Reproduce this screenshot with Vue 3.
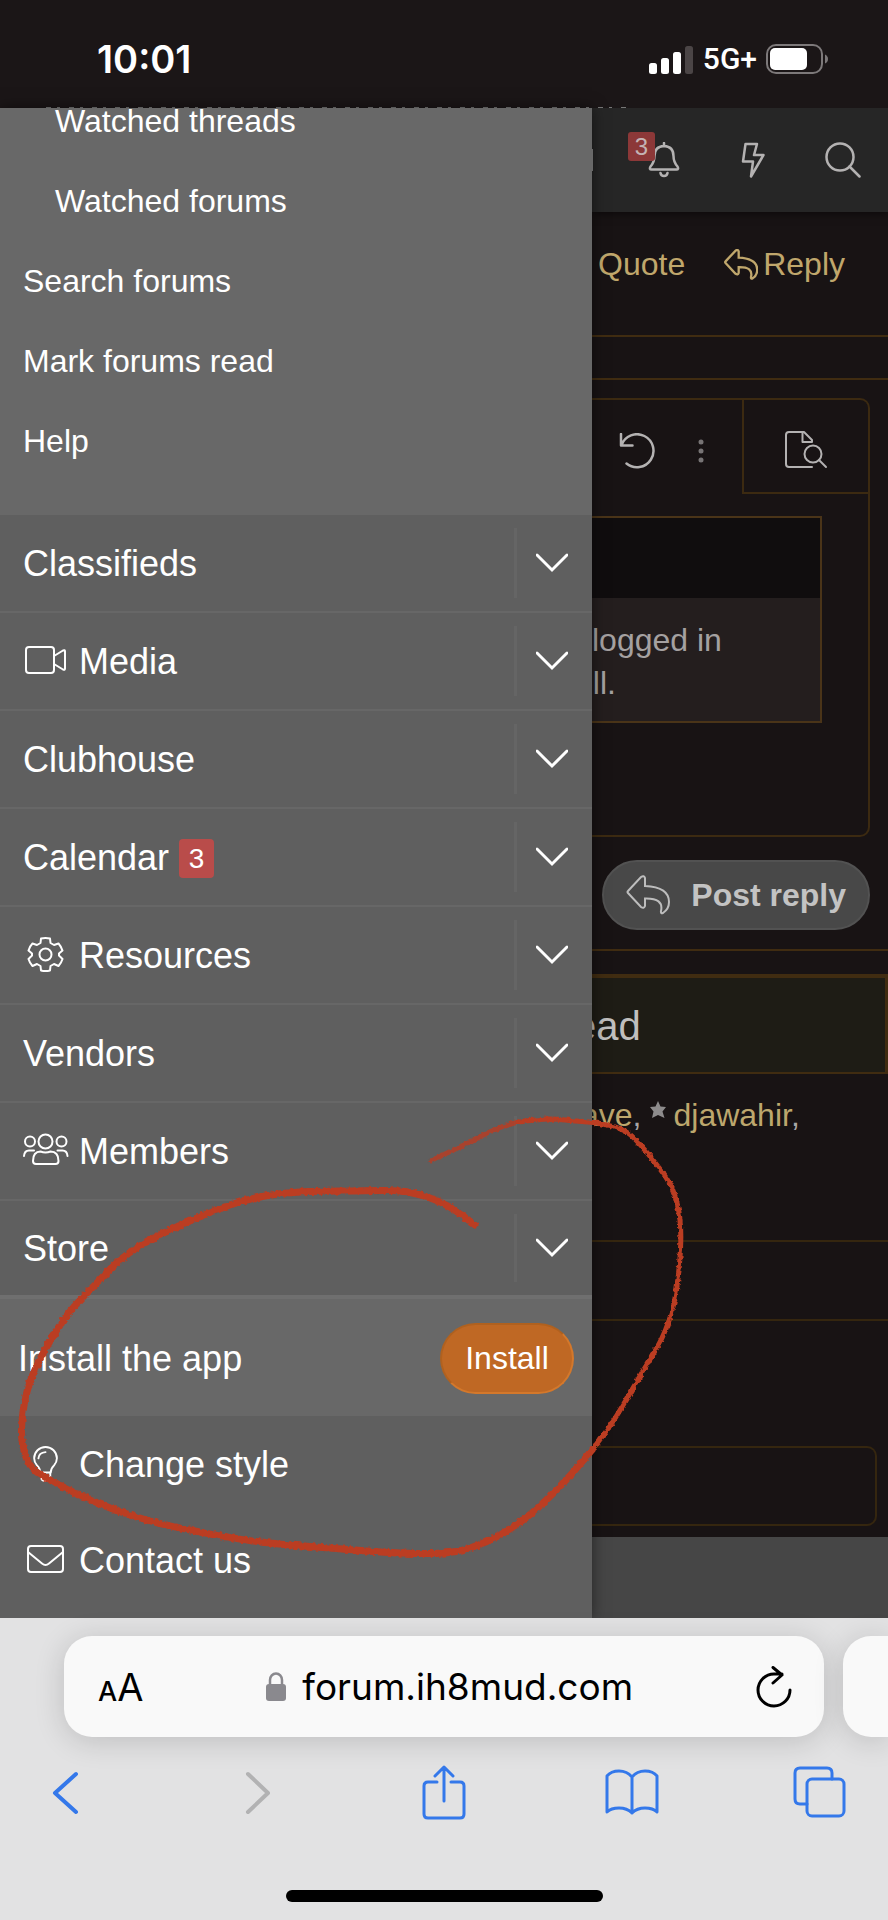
<script setup>
const subLinks = [
  { label: 'Watched threads', nested: true },
  { label: 'Watched forums', nested: true },
  { label: 'Search forums' },
  { label: 'Mark forums read' },
  { label: 'Help' },
]

const sections = [
  { label: 'Classifieds' },
  { label: 'Media', icon: 'video' },
  { label: 'Clubhouse' },
  { label: 'Calendar', badge: 3 },
  { label: 'Resources', icon: 'gear' },
  { label: 'Vendors' },
  { label: 'Members', icon: 'people' },
  { label: 'Store' },
]

// Points of the hand-drawn marker loop, joined with a Catmull-Rom curve.
const markerStart = [[431, 1161], [445, 1154], [470, 1142], [494, 1130], [518, 1122]]
const markerRight = [
  [518, 1122], [548, 1119], [575, 1121], [602, 1124], [628, 1133], [653, 1160], [672, 1188],
  [680, 1220], [680, 1258], [674, 1303], [662, 1338], [640, 1376], [614, 1420], [592, 1450],
]
const markerLeft = [
  [592, 1450], [566, 1480], [532, 1513], [500, 1535], [470, 1548], [444, 1553], [400, 1553],
  [330, 1548], [260, 1542], [200, 1532], [150, 1521], [100, 1504], [50, 1480], [30, 1465],
  [22, 1440], [23, 1412], [30, 1382], [46, 1348], [68, 1314], [92, 1288], [120, 1260],
  [150, 1240], [190, 1221], [230, 1205], [265, 1196], [300, 1192], [350, 1191], [400, 1191],
  [430, 1198], [453, 1209], [475, 1225],
]

function curve(points) {
  let d = `M${points[0].join(' ')}`
  for (let i = 0; i < points.length - 1; i++) {
    const a = points[i - 1] || points[i]
    const b = points[i]
    const c = points[i + 1]
    const e = points[i + 2] || c
    d += ` C${b[0] + (c[0] - a[0]) / 6} ${b[1] + (c[1] - a[1]) / 6}`
    d += ` ${c[0] - (e[0] - b[0]) / 6} ${c[1] - (e[1] - b[1]) / 6} ${c[0]} ${c[1]}`
  }
  return d
}
</script>

<template>
  <div class="screen">
    <header class="status">
      <span class="clock">10:01</span>
      <div class="signals">
        <svg class="bars" viewBox="0 0 45 29" aria-hidden="true">
          <rect x="0" y="18" width="8" height="11" rx="2.500" fill="#fff" />
          <rect x="12" y="13" width="8" height="16" rx="2.500" fill="#fff" />
          <rect x="24" y="7" width="8" height="22" rx="2.500" fill="#fff" />
          <rect x="36" y="1" width="8" height="28" rx="2.500" fill="#4b4546" />
        </svg>
        <span class="network">5G+</span>
        <svg class="battery" viewBox="0 0 62 30" aria-hidden="true">
          <rect x="1" y="1" width="55" height="28" rx="9" fill="none" stroke="#7d797a" stroke-width="2" />
          <rect x="4" y="4" width="37" height="22" rx="5" fill="#fff" />
          <path d="M59 10.500q3 1.500 3 4.500t-3 4.500z" fill="#7d797a" />
        </svg>
      </div>
      <span class="sliver"></span>
    </header>

    <main class="viewport">
      <nav class="drawer" aria-label="Main menu">
        <div class="sub">
          <a v-for="l in subLinks" :key="l.label" href="#" class="sub-link" :class="{ nested: l.nested }">{{ l.label }}</a>
        </div>

        <div v-for="s in sections" :key="s.label" class="row">
          <a href="#" class="row-link">
            <svg v-if="s.icon === 'video'" class="icon" viewBox="0 0 46 36" aria-hidden="true">
              <rect x="3" y="4" width="28" height="26" rx="3" />
              <path d="M31 13L40 7.500Q42 6.500 42 8.500V25.500Q42 27.500 40 26.500L31 21" />
            </svg>
            <svg v-else-if="s.icon === 'gear'" class="icon" viewBox="0 0 46 36" aria-hidden="true">
              <circle cx="22.500" cy="17.500" r="6" />
              <path d="M18 1.500Q22.500 .5 27 1.500L27.500 6L31 8L35.500 6.500Q38 9.300 39.500 13.500L36 16.500V18.500L39.500 22Q38.300 26 35.500 29L31 27L27.500 29L27 33.500Q22.500 34.700 18 33.500L17.500 29L14 27L9.500 29Q6.700 26 5.500 22L9 18.500V16.500L5.500 13.500Q6.700 9.300 9.500 6.500L14 8L17.500 6Z" />
            </svg>
            <svg v-else-if="s.icon === 'people'" class="icon" viewBox="0 0 46 36" aria-hidden="true">
              <circle cx="22.500" cy="8.500" r="7" />
              <circle cx="7" cy="8.500" r="5" />
              <circle cx="38.500" cy="8.500" r="5" />
              <path d="M10 28Q10 18.500 17.500 18.500Q22.500 20.500 27.500 18.500Q35.500 18.500 35.500 28Q35.500 31 32.500 31H13Q10 31 10 28Z" />
              <path d="M1 23Q1.500 17.500 6 17.500H11M44.500 23Q44 17.500 39.500 17.500H34.500" />
            </svg>
            <span>{{ s.label }}</span>
            <span v-if="s.badge" class="badge">{{ s.badge }}</span>
          </a>
          <button class="toggle" type="button" :aria-label="'Toggle ' + s.label">
            <svg class="chevron" viewBox="0 0 32 20" aria-hidden="true"><path d="M1 2L16 17L31 2" /></svg>
          </button>
        </div>

        <div class="install">
          <span>Install the app</span>
          <button class="install-btn" type="button">Install</button>
        </div>

        <div class="footer-links">
          <a href="#" class="foot-link">
            <svg class="icon" viewBox="0 0 46 38" aria-hidden="true">
              <path d="M17 28Q17 24 13.500 20.500Q10.500 17 10.500 13A12 12 0 0 1 34.500 13Q34.500 17 31.500 20.500Q28 24 28 28Z" />
              <path d="M15 13Q15.500 7 22.500 6.500" />
              <path d="M17.500 28V32Q18 37 22.500 37Q27 37 27.500 32V28" />
            </svg>
            <span>Change style</span>
          </a>
          <a href="#" class="foot-link">
            <svg class="icon" viewBox="0 0 46 36" aria-hidden="true">
              <rect x="5" y="4" width="35" height="26" rx="3" />
              <path d="M5 10L19 21.500Q22.500 24.500 26 21.500L40 10" />
            </svg>
            <span>Contact us</span>
          </a>
        </div>
      </nav>

      <section class="page">
        <div class="topbar">
          <span class="edge"></span>
          <button class="top-btn" type="button" aria-label="Alerts">
            <svg class="top-icon" viewBox="0 0 36 36" aria-hidden="true">
              <path d="M19 1V4M19 4Q9.500 4.500 9.500 14Q9.500 20 5.500 24.500Q4 27.500 6.500 27.500H31.500Q34 27.500 32.500 24.500Q28.500 20 28.500 14Q28.500 4.500 19 4M15.500 31Q16 34 19 34Q22 34 22.500 31" />
            </svg>
            <span class="alert-count">3</span>
          </button>
          <button class="top-btn" type="button" aria-label="What's new">
            <svg class="top-icon" viewBox="0 0 36 36" aria-hidden="true"><path d="M10.500 2H22L19 13H28.500L16 34.500L18 19.500H8Z" /></svg>
          </button>
          <button class="top-btn" type="button" aria-label="Search">
            <svg class="top-icon" viewBox="0 0 36 36" aria-hidden="true"><circle cx="15" cy="15" r="13.500" /><path d="M24.500 24.500L34.500 34.500" /></svg>
          </button>
        </div>

        <div class="actions">
          <a href="#">Quote</a>
          <a href="#" class="reply">
            <svg class="reply-icon" viewBox="0 0 44 40" aria-hidden="true">
              <path d="M2 16L15 2Q18 0 19 3V11Q43 12 43 27Q43 34 37 38Q34.500 39 35 36Q38 23 19 23.500V31Q18 34 15 32L2 18Q1 17 2 16Z" />
            </svg>
            <span>Reply</span>
          </a>
        </div>

        <div class="strip"></div>

        <div class="editor">
          <div class="tools">
            <div class="tool-group">
              <button class="tool" type="button" aria-label="Undo">
                <svg class="top-icon" viewBox="0 0 36 36" aria-hidden="true"><path d="M2 1V12.500H13.500M2.500 12A16.500 16.500 0 1 1 7.500 30.500" /></svg>
              </button>
              <button class="tool dots" type="button" aria-label="More options">
                <svg class="dots-icon" viewBox="0 0 6 24" aria-hidden="true"><circle cx="3" cy="3" r="2.500" /><circle cx="3" cy="12" r="2.500" /><circle cx="3" cy="21" r="2.500" /></svg>
              </button>
            </div>
            <button class="preview" type="button" aria-label="Preview">
              <svg class="preview-icon" viewBox="0 0 44 38" aria-hidden="true">
                <path d="M28 36H5Q2 36 2 33V4Q2 1 5 1H20L28 9V11H18.500V1" />
                <circle cx="29" cy="23" r="8.500" />
                <path d="M35 29L42 36" />
              </svg>
            </button>
          </div>
          <div class="quote">
            <div class="quote-head"></div>
            <p class="quote-body">logged in<br /><span class="cut-line">ell.</span></p>
          </div>
        </div>

        <div class="submit">
          <button class="post" type="button">
            <svg class="post-icon" viewBox="0 0 44 40" aria-hidden="true">
              <path d="M2 16L15 2Q18 0 19 3V11Q43 12 43 27Q43 34 37 38Q34.500 39 35 36Q38 23 19 23.500V31Q18 34 15 32L2 18Q1 17 2 16Z" />
            </svg>
            <span>Post reply</span>
          </button>
        </div>

        <div class="rule"></div>
        <h2 class="heading"><span class="cut-head">ead</span></h2>
        <p class="users">
          <span class="cut-user"><a href="#">ave</a>,</span>
          <svg class="star" viewBox="0 0 16 18" aria-hidden="true"><path d="M8 0L10.500 5.500L16 6L12.500 10.500L14.500 17L8 14L2 17L3.500 10.500L0 6L5.500 5.500Z" fill="#8d8b8c" /></svg>
          <span><a href="#">djawahir</a>,</span>
        </p>
        <div class="band"></div>
        <div class="field"></div>
      </section>
    </main>

    <footer class="browser">
      <div class="tabs">
        <div class="address">
          <button class="text-size" type="button" aria-label="Page settings"><span class="small-a">A</span><span class="big-a">A</span></button>
          <div class="host">
            <svg class="lock" viewBox="0 0 20 30" aria-hidden="true">
              <rect x="0" y="12" width="20" height="17" rx="3" fill="#8a898e" />
              <path d="M4 13V8a6 6.500 0 0 1 12 0V13" fill="none" stroke="#8a898e" stroke-width="2.500" />
            </svg>
            <span>forum.ih8mud.com</span>
          </div>
          <button class="reload" type="button" aria-label="Reload">
            <svg class="reload-icon" viewBox="0 0 36 42" aria-hidden="true"><path d="M34 24A16 16 0 1 1 18 8H26M17 1.500L26 9L17 17" /></svg>
          </button>
        </div>
        <div class="next-tab"></div>
      </div>
      <div class="toolbar">
        <button type="button" aria-label="Back"><svg viewBox="0 0 56 56" aria-hidden="true"><path d="M36 9L15 28L36 47" stroke-width="4" /></svg></button>
        <button type="button" class="off" aria-label="Forward" disabled><svg viewBox="0 0 56 56" aria-hidden="true"><path d="M20 9L40 28L20 47" stroke-width="4" /></svg></button>
        <button type="button" aria-label="Share"><svg viewBox="0 0 56 56" aria-hidden="true"><path d="M21 17H12Q8 17 8 21V49Q8 53 12 53H44Q48 53 48 49V21Q48 17 44 17H35M28 36V2M19 11L28 2L37 11" /></svg></button>
        <button type="button" aria-label="Bookmarks"><svg viewBox="0 0 56 56" aria-hidden="true"><path d="M28 12Q23 6 15 6Q7 6 3 11V47Q7 43 15 43Q23 43 28 48Q33 43 41 43Q49 43 53 47V11Q49 6 41 6Q33 6 28 12ZM28 12V48" /></svg></button>
        <button type="button" aria-label="Tabs"><svg viewBox="0 0 56 56" aria-hidden="true"><rect x="15" y="14" width="37" height="37" rx="5" /><path d="M15 39H8Q3 39 3 34V8Q3 3 8 3H35Q40 3 40 8V14" /></svg></button>
      </div>
      <div class="home"></div>
    </footer>

    <svg class="marker" viewBox="0 0 888 1920" aria-hidden="true">
      <defs>
        <filter id="rough" x="-5%" y="-5%" width="110%" height="110%">
          <feTurbulence type="fractalNoise" baseFrequency="0.25" numOctaves="2" seed="4" />
          <feDisplacementMap in="SourceGraphic" scale="4" xChannelSelector="R" yChannelSelector="G" />
        </filter>
      </defs>
      <g filter="url(#rough)">
        <path :d="curve(markerStart)" stroke-width="5" opacity="0.8" />
        <path :d="curve(markerRight)" stroke-width="5" />
        <path :d="curve(markerLeft)" stroke-width="7" />
      </g>
    </svg>
  </div>
</template>

<style>
body {
  background: #e2e2e3;
}
</style>

<style scoped>
* {
  box-sizing: border-box;
}
.screen {
  position: relative;
  display: flex;
  flex-direction: column;
  min-height: 100vh;
  overflow: hidden;
  font-family: "Liberation Sans", Arial, sans-serif;
  font-size: 32px;
  color: #fff;
}
a {
  color: inherit;
  text-decoration: none;
}
button {
  margin: 0;
  padding: 0;
  border: 0;
  background: none;
  color: inherit;
  font: inherit;
}
svg {
  display: block;
  flex: none;
}

/* Status bar */
.status {
  position: relative;
  display: flex;
  justify-content: space-between;
  align-items: center;
  height: 108px;
  padding: 10px 60px 0 97px;
  background: #1b1617;
}
.clock {
  font: 600 38px/40px Inter, sans-serif;
}
.signals {
  display: flex;
  align-items: center;
  gap: 9px;
}
.bars {
  width: 45px;
  height: 29px;
}
.network {
  font: 500 30px/32px Roboto, sans-serif;
}
.battery {
  width: 62px;
  height: 30px;
}
.sliver {
  position: absolute;
  left: 46px;
  right: 256px;
  bottom: 0;
  height: 1px;
  background: repeating-linear-gradient(90deg, #777 0 5px, transparent 5px 11px, #777 11px 14px, transparent 14px 23px);
}

.viewport {
  display: flex;
  align-items: stretch;
}

/* Drawer */
.drawer {
  position: relative;
  z-index: 1;
  flex: 2;
  min-width: 0;
  background: #5f5f5f;
  box-shadow: 0 0 14px rgba(0, 0, 0, 0.5);
  font-size: 36px;
}
.sub {
  display: flex;
  flex-direction: column;
  justify-content: flex-end;
  height: 407px;
  padding-bottom: 34px;
  overflow: hidden;
  background: #686868;
  font-size: 32px;
}
.sub-link {
  flex: none;
  padding-left: 23px;
  line-height: 80px;
}
.nested {
  padding-left: 55px;
}
.row {
  display: flex;
  align-items: stretch;
  height: 98px;
  border-bottom: 2px solid #676767;
}
.row:nth-child(9) {
  border-bottom: 4px solid #6f6f6f;
}
.row-link,
.foot-link {
  display: flex;
  flex: 1;
  align-items: center;
  gap: 10px;
  padding-top: 2px;
  padding-left: 23px;
}
.icon {
  width: 46px;
  height: 36px;
  margin-top: -2px;
  fill: none;
  stroke: #fff;
  stroke-width: 2;
  stroke-linejoin: round;
  stroke-linecap: round;
}
.badge {
  width: 35px;
  border-radius: 4px;
  background: #b94c4a;
  font-size: 28px;
  line-height: 39px;
  text-align: center;
}
.toggle {
  display: flex;
  justify-content: center;
  align-items: center;
  width: 78px;
  margin: 13px 0;
  padding-right: 6px;
  border-left: 3px solid #656565;
}
.chevron {
  width: 32px;
  height: 20px;
  fill: none;
  stroke: #fff;
  stroke-width: 3;
  stroke-linecap: round;
}
.install {
  display: flex;
  justify-content: space-between;
  align-items: center;
  height: 117px;
  padding: 2px 18px 0;
  background: #686868;
}
.install-btn {
  width: 134px;
  height: 71px;
  border: 2px solid;
  border-color: #b0611f #d4782b #d4782b #b0611f;
  border-radius: 36px;
  background: #bf6824;
  font-size: 32px;
}
.footer-links {
  padding-bottom: 10px;
}
.foot-link {
  height: 96px;
}

/* Forum page */
.page {
  flex: 1;
  min-width: 0;
  overflow: hidden;
  background: linear-gradient(#181314, #181314) top / 100% 1429px no-repeat #464646;
}
.topbar {
  display: flex;
  align-items: center;
  justify-content: flex-end;
  height: 104px;
  background: #262626;
  box-shadow: 0 2px 8px rgba(0, 0, 0, 0.5);
}
.edge {
  width: 1px;
  height: 22px;
  margin-right: auto;
  background: #8a8a8a;
}
.top-btn {
  position: relative;
  display: flex;
  justify-content: center;
  align-items: center;
  width: 90px;
  height: 100%;
}
.top-icon {
  width: 36px;
  height: 36px;
  fill: none;
  stroke: #b4b2b2;
  stroke-width: 2.5;
  stroke-linecap: round;
  stroke-linejoin: round;
}
.alert-count {
  position: absolute;
  top: 24px;
  left: 10px;
  width: 27px;
  border-radius: 3px;
  background: #8c3838;
  color: #c4b4b4;
  font-size: 24px;
  line-height: 29px;
  text-align: center;
}
.actions {
  display: flex;
  justify-content: flex-end;
  align-items: center;
  gap: 39px;
  height: 104px;
  margin-bottom: 19px;
  padding-right: 43px;
  color: #c0a76c;
}
.reply {
  display: flex;
  align-items: center;
  gap: 5px;
}
.reply-icon {
  width: 34px;
  height: 31px;
  fill: none;
  stroke: #c0a76c;
  stroke-width: 3;
}
.strip {
  height: 45px;
  border-top: 2px solid #402c11;
  border-bottom: 2px solid #402c11;
}
.editor {
  height: 439px;
  margin: 18px 18px 0 0;
  border: 2px solid #3c2a11;
  border-left: 0;
  border-radius: 0 10px 10px 0;
}
.tools {
  display: flex;
  height: 94px;
}
.tool-group {
  display: flex;
  flex: 1;
  align-items: center;
  padding-top: 7px;
}
.tool {
  display: flex;
  justify-content: center;
  width: 90px;
}
.dots {
  width: 38px;
}
.dots-icon {
  width: 6px;
  height: 24px;
  fill: #777475;
}
.preview {
  display: flex;
  justify-content: center;
  align-items: center;
  width: 126px;
  padding-top: 8px;
  border-left: 2px solid #3c2a11;
  border-bottom: 2px solid #3c2a11;
}
.preview-icon {
  width: 44px;
  height: 38px;
  fill: none;
  stroke: #b4b2b2;
  stroke-width: 2;
  stroke-linecap: round;
  stroke-linejoin: round;
}
.quote {
  margin: 22px 46px 0 0;
  border: 2px solid #4a3418;
  border-left: 0;
  background: #241e1e;
}
.quote-head {
  height: 80px;
  background: #100d0e;
}
.quote-body {
  height: 123px;
  margin: 0;
  padding-top: 21px;
  color: #a5a1a1;
  line-height: 43px;
}
.cut-line {
  margin-left: -17px;
}
.submit {
  display: flex;
  justify-content: flex-end;
  margin: 23px 18px 19px 0;
}
.post {
  display: flex;
  align-items: center;
  gap: 21px;
  height: 70px;
  padding: 0 22px;
  border: 2px solid #525252;
  border-radius: 35px;
  background: #484848;
  color: #c3c3c3;
  font-weight: 700;
}
.post-icon {
  width: 44px;
  height: 40px;
  fill: none;
  stroke: #bdbdbd;
  stroke-width: 2;
}
.rule {
  height: 2px;
  background: #402c11;
}
.heading {
  height: 100px;
  margin: 23px 0 0;
  border: 4px solid #402c11;
  border-left: 0;
  border-right-width: 3px;
  border-bottom-width: 2px;
  background: #1e1c15;
  color: #c0bfbe;
  font-size: 40px;
  font-weight: 400;
  line-height: 96px;
}
.cut-head {
  margin-left: -18px;
}
.users {
  display: flex;
  height: 166px;
  margin: 0;
  padding-top: 21px;
  color: #a9a6a7;
  line-height: 40px;
}
.users a {
  color: #bda76d;
}
.cut-user {
  margin-left: -11px;
}
.star {
  width: 16px;
  height: 18px;
  margin: 6px 7px 0 9px;
}
.band {
  height: 81px;
  border-top: 2px solid #35260f;
  border-bottom: 2px solid #35260f;
}
.field {
  height: 80px;
  margin: 125px 11px 11px 0;
  border: 2px solid #35260f;
  border-left: 0;
  border-radius: 0 10px 10px 0;
}

/* Browser controls */
.browser {
  position: relative;
  z-index: 2;
  display: flex;
  flex: 1;
  flex-direction: column;
  background: #e2e2e3;
  color: #000;
}
.tabs {
  display: flex;
  gap: 19px;
  padding: 18px 0 0 64px;
}
.address {
  display: flex;
  flex: 1;
  align-items: center;
  justify-content: space-between;
  height: 101px;
  padding: 0 32px 0 34px;
  border-radius: 28px;
  background: #f9f9f9;
  box-shadow: 0 4px 30px rgba(0, 0, 0, 0.16);
  font-family: Inter, sans-serif;
}
.next-tab {
  width: 45px;
  height: 101px;
  border-radius: 28px 0 0 28px;
  background: #f9f9f9;
  box-shadow: 0 4px 30px rgba(0, 0, 0, 0.16);
}
.small-a {
  font-size: 27px;
  font-weight: 500;
}
.big-a {
  font-size: 38px;
}
.host {
  display: flex;
  align-items: center;
  gap: 16px;
  font-size: 37px;
}
.lock {
  width: 20px;
  height: 30px;
}
.reload-icon {
  width: 36px;
  height: 42px;
  fill: none;
  stroke: #000;
  stroke-width: 3;
  stroke-linecap: round;
  stroke-linejoin: round;
}
.toolbar {
  display: flex;
  justify-content: space-between;
  padding: 28px 40px 0;
}
.toolbar svg {
  width: 56px;
  height: 56px;
  fill: none;
  stroke: #3478ea;
  stroke-width: 3;
  stroke-linecap: round;
  stroke-linejoin: round;
}
.toolbar .off svg {
  stroke: #b2b2b3;
}
.home {
  width: 317px;
  height: 12px;
  margin: auto auto 18px;
  border-radius: 6px;
  background: #000;
}

.marker {
  position: absolute;
  z-index: 3;
  top: 0;
  left: 0;
  width: 100%;
  height: auto;
  fill: none;
  stroke: #bb3c22;
  stroke-linecap: round;
  pointer-events: none;
}
</style>
